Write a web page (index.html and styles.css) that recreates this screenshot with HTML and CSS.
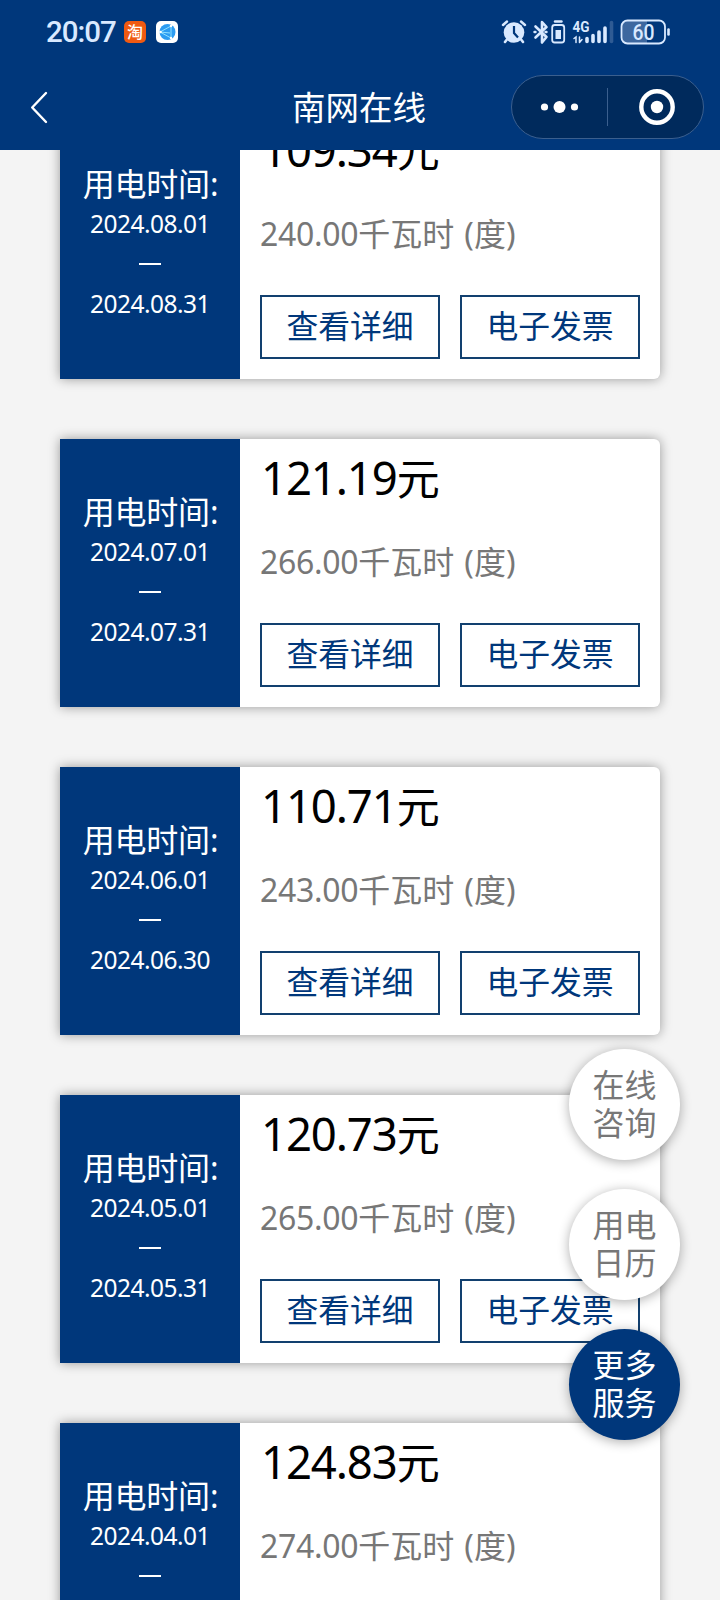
FILE: index.html
```html
<!DOCTYPE html>
<html lang="zh-CN">
<head>
<meta charset="utf-8">
<title>南网在线</title>
<link rel="stylesheet" href="styles.css">
</head>
<body>
<div class="screen">
  <header class="header">
    <div class="status">
      <span class="clock">20:07</span>
      <span class="app-badge">淘</span>
      <svg class="browser" width="22" height="22" viewBox="0 0 22 22"><rect width="22" height="22" rx="5" fill="#fff"/><circle cx="11.5" cy="11" r="8" fill="#2b9cf2"/><path d="M4 11 15 5v12L4 11l10 1" fill="none" stroke="#8fe0ff" stroke-width="1"/><circle cx="4.500" cy="11" r="1.300" fill="#fff"/><circle cx="15" cy="5" r="1.200" fill="#fff"/><circle cx="15" cy="17" r="1.200" fill="#fff"/></svg>
      <svg class="indicators" width="172" height="28" viewBox="500 18 172 28">
        <g fill="none" stroke="#d9e9ff" stroke-linecap="round">
          <path d="M503 25l4-3.500M521 21.500l4 3.500" stroke-width="2.400"/>
          <path d="M506.500 40l-1.500 2M521.500 40l1.500 2" stroke-width="2.600"/>
          <circle cx="514" cy="32.500" r="10.300" fill="#d9e9ff" stroke="none"/>
          <path d="M514 26v7l4 4.500" stroke="#00377b" stroke-width="2.200" stroke-linecap="butt"/>
          <path d="M535.500 26.500l11 10.500-4.500 5.500V22l4.500 5-11 10.500" stroke-width="2.600" stroke-linejoin="round"/>
          <path d="M534.500 32h1M545.500 32h1" stroke-width="2.400"/>
          <rect x="552.200" y="25" width="12" height="17.500" rx="2.500" stroke-width="1.800"/>
          <path d="M555 21.500h6.500" stroke-width="2.400"/>
          <rect x="555.500" y="30" width="5.500" height="9" fill="#d9e9ff" stroke="none"/>
          <path d="M574 38.500l2-1.500v5.500M579.500 37v5.500M579.500 42.500l2.500-3" stroke-width="1.500"/>
          <path d="M587 38.500v3M593 35.500v6M599 32v9.500M605 28v13.500" stroke-width="3.600"/>
          <path d="M611.500 22.500v19" stroke="#2f5b94" stroke-width="3.600"/>
          <path d="M627 21h20v22h-20a5 5 0 0 1-5-5V26a5 5 0 0 1 5-5z" fill="#3d679f" stroke="none"/>
          <rect x="621.500" y="20.500" width="43.500" height="23" rx="6" stroke-width="1.800"/>
          <path d="M668.500 29.500v5" stroke-width="2.600"/>
        </g>
        <text class="network" x="572.500" y="32" textLength="17" lengthAdjust="spacingAndGlyphs">4G</text>
        <text class="charge" x="632.500" y="40" textLength="22" lengthAdjust="spacingAndGlyphs">60</text>
      </svg>
    </div>
    <div class="nav">
      <svg class="back" width="20" height="34" viewBox="0 0 20 34"><path d="M17 3 3.200 17.500 17 32" fill="none" stroke="#fff" stroke-width="2.400" stroke-linecap="round" stroke-linejoin="round"/></svg>
      <h1 class="title">南网在线</h1>
      <svg class="capsule" width="194" height="64" viewBox="0 0 194 64"><rect x=".5" y=".5" width="192" height="63" rx="31.500" fill="#002a5c" stroke="#3b5f8e"/><g fill="#fff"><circle cx="33.500" cy="32" r="3.600"/><circle cx="48.500" cy="32" r="6"/><circle cx="63.500" cy="32" r="3.600"/><circle cx="146" cy="32" r="6.200"/></g><circle cx="146" cy="32" r="15.700" fill="none" stroke="#fff" stroke-width="4.400"/><path d="M96.500 13v38" stroke="#3b5f8e"/></svg>
    </div>
  </header>
  <main class="bills">
    <article class="card">
      <div class="period"><span class="label">用电时间:</span><span>2024.08.01</span><span class="dash"></span><span>2024.08.31</span></div>
      <div class="detail"><div class="amount"><span class="figure">109.34</span>元</div><div class="usage"><span class="figure">240.00</span>千瓦时<span class="unit">(<span>度</span>)</span></div><div class="actions"><button class="button">查看详细</button><button class="button">电子发票</button></div></div>
    </article>
    <article class="card">
      <div class="period"><span class="label">用电时间:</span><span>2024.07.01</span><span class="dash"></span><span>2024.07.31</span></div>
      <div class="detail"><div class="amount"><span class="figure">121.19</span>元</div><div class="usage"><span class="figure">266.00</span>千瓦时<span class="unit">(<span>度</span>)</span></div><div class="actions"><button class="button">查看详细</button><button class="button">电子发票</button></div></div>
    </article>
    <article class="card">
      <div class="period"><span class="label">用电时间:</span><span>2024.06.01</span><span class="dash"></span><span>2024.06.30</span></div>
      <div class="detail"><div class="amount"><span class="figure">110.71</span>元</div><div class="usage"><span class="figure">243.00</span>千瓦时<span class="unit">(<span>度</span>)</span></div><div class="actions"><button class="button">查看详细</button><button class="button">电子发票</button></div></div>
    </article>
    <article class="card">
      <div class="period"><span class="label">用电时间:</span><span>2024.05.01</span><span class="dash"></span><span>2024.05.31</span></div>
      <div class="detail"><div class="amount"><span class="figure">120.73</span>元</div><div class="usage"><span class="figure">265.00</span>千瓦时<span class="unit">(<span>度</span>)</span></div><div class="actions"><button class="button">查看详细</button><button class="button">电子发票</button></div></div>
    </article>
    <article class="card">
      <div class="period"><span class="label">用电时间:</span><span>2024.04.01</span><span class="dash"></span></div>
      <div class="detail"><div class="amount"><span class="figure">124.83</span>元</div><div class="usage"><span class="figure">274.00</span>千瓦时<span class="unit">(<span>度</span>)</span></div></div>
    </article>
  </main>
  <nav class="shortcuts">
    <a class="shortcut">在线<br>咨询</a>
    <a class="shortcut">用电<br>日历</a>
    <a class="shortcut shortcut-primary">更多<br>服务</a>
  </nav>
</div>
</body>
</html>
```
FILE: styles.css
```css
* { box-sizing: border-box; }
body { margin: 0; background: #f4f4f4; font-family: "Noto Sans", "Noto Sans CJK SC", sans-serif; }
.screen { position: relative; display: flex; flex-direction: column; width: 720px; height: 1600px; overflow: hidden; }
.header { flex: none; height: 150px; background: #00377b; color: #fff; }
.status { display: flex; align-items: center; height: 64px; padding-left: 46px; }
.clock { width: 70px; font: 500 29.500px/66px Roboto, sans-serif; letter-spacing: -1px; color: #d9e9ff; white-space: nowrap; }
.app-badge { width: 22px; height: 22px; margin-left: 8px; border-radius: 5px; background: #f05a12; color: #fff; font: 500 16px/21px "Noto Sans CJK SC", sans-serif; text-align: center; }
.browser { margin-left: 10px; }
.indicators { margin-left: 322px; }
.network { font: 700 14px Roboto, sans-serif; fill: #d9e9ff; }
.charge { font: 500 22px Roboto, sans-serif; fill: #d9e9ff; }
.nav { display: grid; grid-template-columns: 140px 1fr 209px; align-items: center; height: 86px; }
.back { margin-left: 29px; }
.title { margin: 0 0 3px 67px; width: 304px; margin-left: 67px; text-align: center; transform: none; padding-right: 0; font: 400 33.500px/50px "Noto Sans CJK SC", sans-serif; }
.capsule { margin-bottom: 1px; }
.bills { flex: 1; min-height: 0; display: flex; flex-direction: column; gap: 60px; width: 720px; margin-top: -39px; padding: 0 60px; clip-path: inset(39px 0 0 0); }
.card { flex: none; display: flex; width: 600px; height: 268px; border-radius: 0 6px 6px 0; background: #fff; box-shadow: 0 0 12px rgba(0, 0, 0, .38); }
.period { display: flex; flex-direction: column; align-items: center; width: 180px; padding-top: 53px; background: #00377b; color: #fff; font-size: 24.500px; line-height: 40px; letter-spacing: -.5px; }
.label { padding-left: 1px; font-size: 32px; letter-spacing: -.2px; }
.dash { width: 22px; height: 40px; background: linear-gradient(#fff, #fff) center 19px / 22px 2px no-repeat; }
.detail { flex: 1; padding: 0 20px; }
.amount { height: 80px; padding-left: 1px; font-size: 43px; line-height: 77px; color: #000; white-space: nowrap; }
.amount .figure { font-size: 45.500px; letter-spacing: -1.100px; }
.usage { height: 104px; font-size: 32px; line-height: 86px; color: #777; white-space: nowrap; }
.usage .figure { letter-spacing: -.3px; }
.unit { margin-left: 10px; }
.actions { display: flex; gap: 20px; }
.button { width: 180px; height: 64px; padding: 0 0 5px; border: 2px solid #12406f; background: #fff; color: #00377b; font: 400 31.800px/55px "Noto Sans CJK SC", sans-serif; }
.shortcuts { position: absolute; top: 1049px; right: 40px; display: flex; flex-direction: column; gap: 29px; }
.shortcut { width: 111px; height: 111px; padding-top: 15px; border-radius: 50%; background: #fff; color: #777; text-align: center; font: 400 32px/38px "Noto Sans CJK SC", sans-serif; box-shadow: 0 2px 12px rgba(0, 0, 0, .32); }
.shortcut-primary { background: #00377b; color: #fff; }
```
